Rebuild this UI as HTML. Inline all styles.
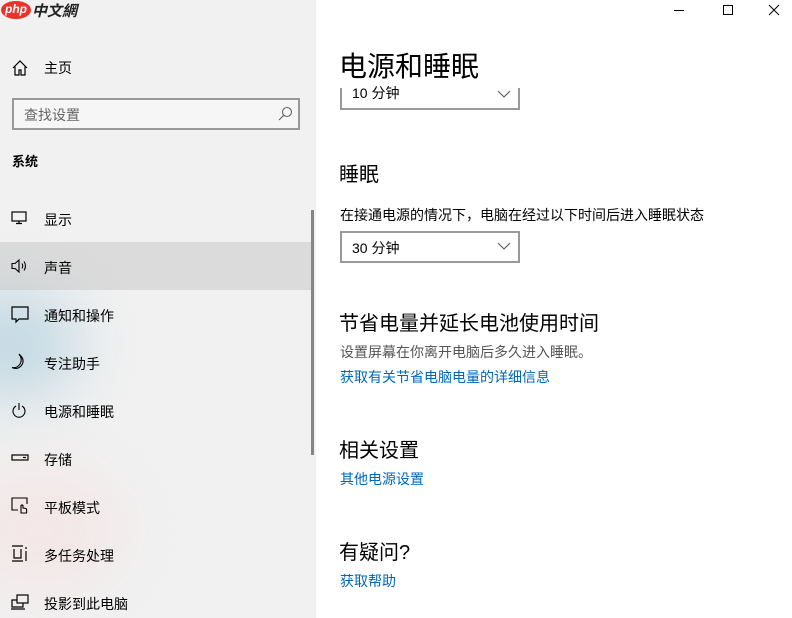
<!DOCTYPE html>
<html><head><meta charset="utf-8"><style>
*{margin:0;padding:0;box-sizing:border-box}
body{width:792px;height:618px;overflow:hidden;position:relative;font-family:"Liberation Sans","Noto Sans CJK SC",sans-serif;color:#000;background:#fff}
#side{position:absolute;left:0;top:0;width:316px;height:618px;background:#f1f1f1;overflow:hidden}
.blob{position:absolute;border-radius:50%;filter:blur(30px)}
.t{position:absolute;font-size:14px;white-space:nowrap}
.ic{position:absolute;left:11px}
a{color:#0067b8;text-decoration:none}
</style></head><body>
<div id="side">
 <div class="blob" style="left:-60px;top:290px;width:140px;height:110px;background:#c3d9e3"></div>
 <div class="blob" style="left:-40px;top:470px;width:160px;height:120px;background:#f3e6e6"></div>
 <div style="position:absolute;left:0;top:242px;width:314px;height:48px;background:rgba(200,200,200,.55)"></div>
 <div style="position:absolute;left:311px;top:210px;width:3px;height:245px;background:#858585"></div>
 <div style="position:absolute;left:1px;top:1px;width:30px;height:18px;border-radius:50%;background:#e8322c;color:#fff;font-size:12px;font-style:italic;font-weight:bold;line-height:17px;text-align:center">php</div>
 <div class="t" style="left:32px;top:0px;font-size:15px;font-style:italic;font-weight:bold;color:#222">中文網</div>
 <svg class="ic" style="top:59px" width="18" height="18" viewBox="0 0 18 18" fill="none" stroke="#000" stroke-width="1.2"><path d="M2 9 9 2 16 9M4 7.5V16H8V11H10V16H14V7.5"/></svg>
 <div class="t" style="left:44px;top:58px">主页</div>
 <div style="position:absolute;left:12px;top:98px;width:288px;height:32px;border:2px solid #999;background:#f6f6f6"></div>
 <div class="t" style="left:24px;top:105px;color:#666">查找设置</div>
 <svg style="position:absolute;left:278px;top:106px" width="15" height="15" viewBox="0 0 15 15" fill="none" stroke="#666" stroke-width="1.1"><circle cx="9" cy="6" r="4.5"/><path d="M5.8 9.2 1 14"/></svg>
 <div class="t" style="left:12px;top:151px;font-weight:bold;font-size:13px">系统</div>
 <svg class="ic" style="top:211px" width="16" height="14" viewBox="0 0 16 14" fill="none" stroke="#000" stroke-width="1.2"><rect x="1" y="1" width="14" height="9"/><path d="M5 12.5H11M8 10V12.5"/></svg>
 <div class="t" style="left:44px;top:210px">显示</div>
 <svg class="ic" style="top:258px" width="18" height="16" viewBox="0 0 18 16" fill="none" stroke="#000" stroke-width="1.1"><path d="M1 5.5H4L8 2V14L4 10.5H1Z"/><path d="M11 5.5Q12.5 8 11 10.5M13 3.5Q16 8 13 12.5"/></svg>
 <div class="t" style="left:44px;top:258px">声音</div>
 <svg class="ic" style="top:306px" width="18" height="18" viewBox="0 0 18 18" fill="none" stroke="#000" stroke-width="1.2"><path d="M1 1H17V13H8L5 16V13H1Z"/></svg>
 <div class="t" style="left:44px;top:306px">通知和操作</div>
 <svg class="ic" style="top:353px" width="16" height="18" viewBox="0 0 16 18" fill="none" stroke="#000" stroke-width="1.1"><path d="M8 1Q15 7 10 13Q6 17 1 14.5Q6 15.5 9 11Q12 6 8 1Z"/></svg>
 <div class="t" style="left:44px;top:354px">专注助手</div>
 <svg class="ic" style="top:402px" width="16" height="17" viewBox="0 0 16 17" fill="none" stroke="#000" stroke-width="1.1"><path d="M5 4A6 6 0 1 0 11 4M8 1V8"/></svg>
 <div class="t" style="left:44px;top:402px">电源和睡眠</div>
 <svg class="ic" style="top:454px" width="18" height="8" viewBox="0 0 18 8" fill="none" stroke="#000" stroke-width="1.2"><rect x="1" y="1" width="16" height="5"/><path d="M12 3.5H15"/></svg>
 <div class="t" style="left:44px;top:450px">存储</div>
 <svg class="ic" style="top:497px" width="18" height="18" viewBox="0 0 18 18" fill="none" stroke="#000" stroke-width="1.1"><path d="M7 13H1V1H16V7"/><path d="M10 16V8.5Q11 7.5 12 8.5V11L15 11.5Q16 12 15.5 16Z"/></svg>
 <div class="t" style="left:44px;top:498px">平板模式</div>
 <svg class="ic" style="top:545px" width="18" height="18" viewBox="0 0 18 18" fill="none" stroke="#000" stroke-width="1.2"><path d="M1 1H12M1 16H12M3 4V13H10V4M15 2V4M15 6V16"/></svg>
 <div class="t" style="left:44px;top:546px">多任务处理</div>
 <svg class="ic" style="top:594px" width="18" height="16" viewBox="0 0 18 16" fill="none" stroke="#000" stroke-width="1.2"><rect x="6" y="1" width="11" height="8"/><path d="M6 6H1V13H12V9M0 15H14"/></svg>
 <div class="t" style="left:44px;top:594px">投影到此电脑</div>
</div>
<div id="main">
 <svg style="position:absolute;left:674px;top:4px" width="110" height="12" viewBox="0 0 110 12" fill="none" stroke="#000" stroke-width="1"><path d="M0 6.5H10"/><rect x="49.5" y="1.5" width="9" height="9"/><path d="M95 1 105 11M105 1 95 11"/></svg>
 <div class="t" style="left:339px;top:45px;font-size:28px">电源和睡眠</div>
 <div style="position:absolute;left:340px;top:88px;width:180px;height:22px;border:2px solid #999;border-top:none;background:#fff"></div>
 <div class="t" style="left:352px;top:86px;height:16px;overflow:hidden;line-height:14px">10 分钟</div>
 <svg style="position:absolute;left:497px;top:90px" width="14" height="8" viewBox="0 0 14 8" fill="none" stroke="#555"><path d="M1 1 7 7 13 1"/></svg>
 <div class="t" style="left:339px;top:158px;font-size:20px">睡眠</div>
 <div class="t" style="left:340px;top:205px">在接通电源的情况下，电脑在经过以下时间后进入睡眠状态</div>
 <div style="position:absolute;left:340px;top:231px;width:180px;height:32px;border:2px solid #999"></div>
 <div class="t" style="left:352px;top:238px">30 分钟</div>
 <svg style="position:absolute;left:497px;top:242px" width="14" height="8" viewBox="0 0 14 8" fill="none" stroke="#555"><path d="M1 1 7 7 13 1"/></svg>
 <div class="t" style="left:339px;top:307px;font-size:20px">节省电量并延长电池使用时间</div>
 <div class="t" style="left:340px;top:342px;color:#555">设置屏幕在你离开电脑后多久进入睡眠。</div>
 <div class="t" style="left:340px;top:367px"><a>获取有关节省电脑电量的详细信息</a></div>
 <div class="t" style="left:339px;top:434px;font-size:20px">相关设置</div>
 <div class="t" style="left:340px;top:469px"><a>其他电源设置</a></div>
 <div class="t" style="left:339px;top:536px;font-size:20px">有疑问?</div>
 <div class="t" style="left:340px;top:571px"><a>获取帮助</a></div>
</div>
</body></html>
